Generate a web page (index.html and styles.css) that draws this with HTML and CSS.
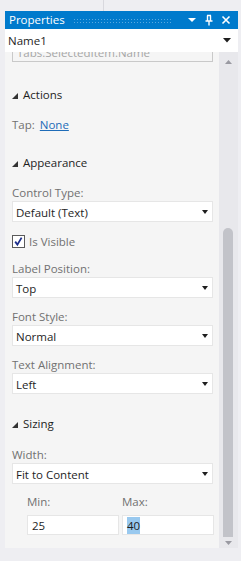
FILE: index.html
```html
<!DOCTYPE html>
<html lang="en">
<head>
    <meta charset="UTF-8">
    <meta name="viewport" content="width=device-width, initial-scale=1.0">
    <title>Properties</title>
    <link rel="stylesheet" href="styles.css">
</head>
<body>
    <div class="top-strip"><div class="tab-edge"></div></div>

    <div class="window">
        <!-- title bar -->
        <div class="titlebar">
            <span class="title">Properties</span>
            <span class="grip"></span>
            <svg class="tb-icon" width="9" height="6" viewBox="0 0 9 6"><polygon points="0,1 8,1 4,5" fill="#fff"/></svg>
            <svg class="tb-icon" width="10" height="12" viewBox="0 0 10 12">
                <path d="M3 1.5h4M3.5 1.5v5M6.5 1.5v5M1.5 7h7M5 7v4.5" stroke="#fff" stroke-width="1.4" fill="none"/>
            </svg>
            <svg class="tb-icon" width="10" height="10" viewBox="0 0 10 10">
                <path d="M1.5 1.5l7 7M8.5 1.5l-7 7" stroke="#fff" stroke-width="1.6"/>
            </svg>
        </div>

        <!-- object selector -->
        <div class="object-select">
            <span>Name1</span>
            <svg width="8" height="5" viewBox="0 0 8 5"><polygon points="0,0 8,0 4,4.5" fill="#1e1e1e"/></svg>
        </div>

        <div class="panel">
            <div class="content">
                <!-- scrolled past: only the lower half shows -->
                <div class="text-box disabled">Tabs.SelectedItem.Name</div>

                <div class="section-head first">
                    <svg width="6" height="6" viewBox="0 0 6 6"><polygon points="6,0 6,6 0,6" fill="#333"/></svg>
                    Actions
                </div>
                <div class="tap-row">Tap: <a href="#" class="link">None</a></div>

                <div class="section-head">
                    <svg width="6" height="6" viewBox="0 0 6 6"><polygon points="6,0 6,6 0,6" fill="#333"/></svg>
                    Appearance
                </div>

                <div class="field first">
                    <div class="field-label">Control Type:</div>
                    <div class="select"><span>Default (Text)</span><i class="caret"></i></div>
                </div>

                <label class="check-row">
                    <svg width="13" height="13" viewBox="0 0 13 13">
                        <rect x="0.5" y="0.5" width="12" height="12" fill="#fff" stroke="#5a5a5a"/>
                        <path d="M3.2 6.6l2.2 3 4.2-7" stroke="#1d2f8c" stroke-width="1.8" fill="none"/>
                    </svg>
                    Is Visible
                </label>

                <div class="field">
                    <div class="field-label">Label Position:</div>
                    <div class="select"><span>Top</span><i class="caret"></i></div>
                </div>

                <div class="field">
                    <div class="field-label">Font Style:</div>
                    <div class="select"><span>Normal</span><i class="caret"></i></div>
                </div>

                <div class="field">
                    <div class="field-label">Text Alignment:</div>
                    <div class="select"><span>Left</span><i class="caret"></i></div>
                </div>

                <div class="section-head sizing">
                    <svg width="6" height="6" viewBox="0 0 6 6"><polygon points="6,0 6,6 0,6" fill="#333"/></svg>
                    Sizing
                </div>

                <div class="field width">
                    <div class="field-label">Width:</div>
                    <div class="select"><span>Fit to Content</span><i class="caret"></i></div>
                </div>

                <div class="min-max">
                    <div class="mm-col">
                        <div class="field-label">Min:</div>
                        <div class="text-box">25</div>
                    </div>
                    <div class="mm-col">
                        <div class="field-label">Max:</div>
                        <div class="text-box"><span class="selected">40</span></div>
                    </div>
                </div>
            </div>

            <!-- scrollbar -->
            <div class="scrollbar">
                <div class="sb-arrow up"><svg width="7" height="4" viewBox="0 0 7 4"><polygon points="0,4 7,4 3.5,0" fill="#9a9aa2"/></svg></div>
                <div class="sb-track"><div class="sb-thumb"></div></div>
                <div class="sb-arrow down"><svg width="7" height="4" viewBox="0 0 7 4"><polygon points="0,0 7,0 3.5,4" fill="#9a9aa2"/></svg></div>
            </div>
        </div>
    </div>
</body>
</html>
```

FILE: styles.css
```css
body {
    font-family: "Segoe UI", "Open Sans", sans-serif;
    font-size: 11.5px;
    color: #1e1e1e;
    background-color: #eeeef2;
    margin: 0;
    padding: 0;
}

.top-strip {
    height: 11px;
    display: flex;
}

.tab-edge {
    width: 103px;
    border-right: 1px solid #d8d8de;
}

.window {
    margin-left: 5px;
    width: 233px;
}

.titlebar {
    height: 18px;
    background-color: #007acc;
    color: #fff;
    display: flex;
    align-items: center;
    padding: 0 7px 0 4px;
}

.title {
    line-height: 18px;
}

.grip {
    flex: 1;
    height: 5px;
    margin: 0 8px;
    background-image: radial-gradient(circle, #58a8e0 0.6px, transparent 0.9px);
    background-size: 3px 3px;
}

.tb-icon {
    margin-left: 7px;
}

.object-select {
    height: 23px;
    background-color: #fff;
    display: flex;
    align-items: center;
    justify-content: space-between;
    padding: 0 7px 0 3px;
}

.panel {
    height: 496px;
    display: flex;
}

.content {
    flex: 1;
    background-color: #f5f5f5;
    padding: 0 6px 0 7px;
    overflow: hidden;
}

.text-box {
    height: 20px;
    line-height: 19px;
    background-color: #fff;
    border: 1px solid #e6e6e6;
    padding: 0 4px;
    box-sizing: border-box;
}

.text-box.disabled {
    height: 10px;
    line-height: 1px;
    overflow: hidden;
    border-top: 0;
    background-color: #f5f5f5;
    border-color: #c9c9c9;
    color: #a6a6a6;
}

.section-head {
    height: 20px;
    line-height: 20px;
    margin-top: 18px;
    display: flex;
    align-items: center;
    gap: 5px;
}

.section-head.first {
    margin-top: 23px;
}

.section-head.sizing {
    margin-top: 20px;
}

.section-head svg {
    margin-top: 2px;
}

.tap-row {
    height: 20px;
    line-height: 20px;
    margin-top: 10px;
    color: #717171;
}

.link {
    color: #1e6cb8;
    margin-left: 2px;
}

.field {
    margin-top: 9px;
}

.field.first {
    margin-top: 10px;
}

.field.width {
    margin-top: 11px;
}

.field-label {
    height: 18px;
    line-height: 20px;
    color: #717171;
}

.select {
    height: 21px;
    background-color: #fff;
    border: 1px solid #e6e6e6;
    box-sizing: border-box;
    display: flex;
    align-items: center;
    justify-content: space-between;
    padding: 1px 4px 0 3px;
}

.caret {
    width: 0;
    height: 0;
    border-left: 3.5px solid transparent;
    border-right: 3.5px solid transparent;
    border-top: 4px solid #1e1e1e;
}

.check-row {
    height: 18px;
    margin: 10px 0 6px;
    display: flex;
    align-items: center;
    gap: 4px;
    color: #717171;
}

.min-max {
    display: flex;
    gap: 3px;
    padding-left: 15px;
    margin-right: -1px;
    margin-top: 8px;
}

.mm-col {
    flex: 1;
}

.mm-col .text-box {
    margin-top: 5px;
}

.selected {
    background-color: #99c9ef;
    padding: 1px 0;
}

.scrollbar {
    width: 19px;
    background-color: #e8e8ec;
    display: flex;
    flex-direction: column;
}

.sb-arrow {
    display: flex;
    justify-content: center;
    align-items: center;
}

.sb-arrow.up {
    height: 20px;
}

.sb-arrow.down {
    height: 11px;
}

.sb-track {
    flex: 1;
    display: flex;
    flex-direction: column;
    justify-content: flex-end;
}

.sb-thumb {
    height: 309px;
    margin: 0 5px 0 4px;
    background-color: #c2c3c9;
    border-radius: 5px 5px 0 0;
}
```
